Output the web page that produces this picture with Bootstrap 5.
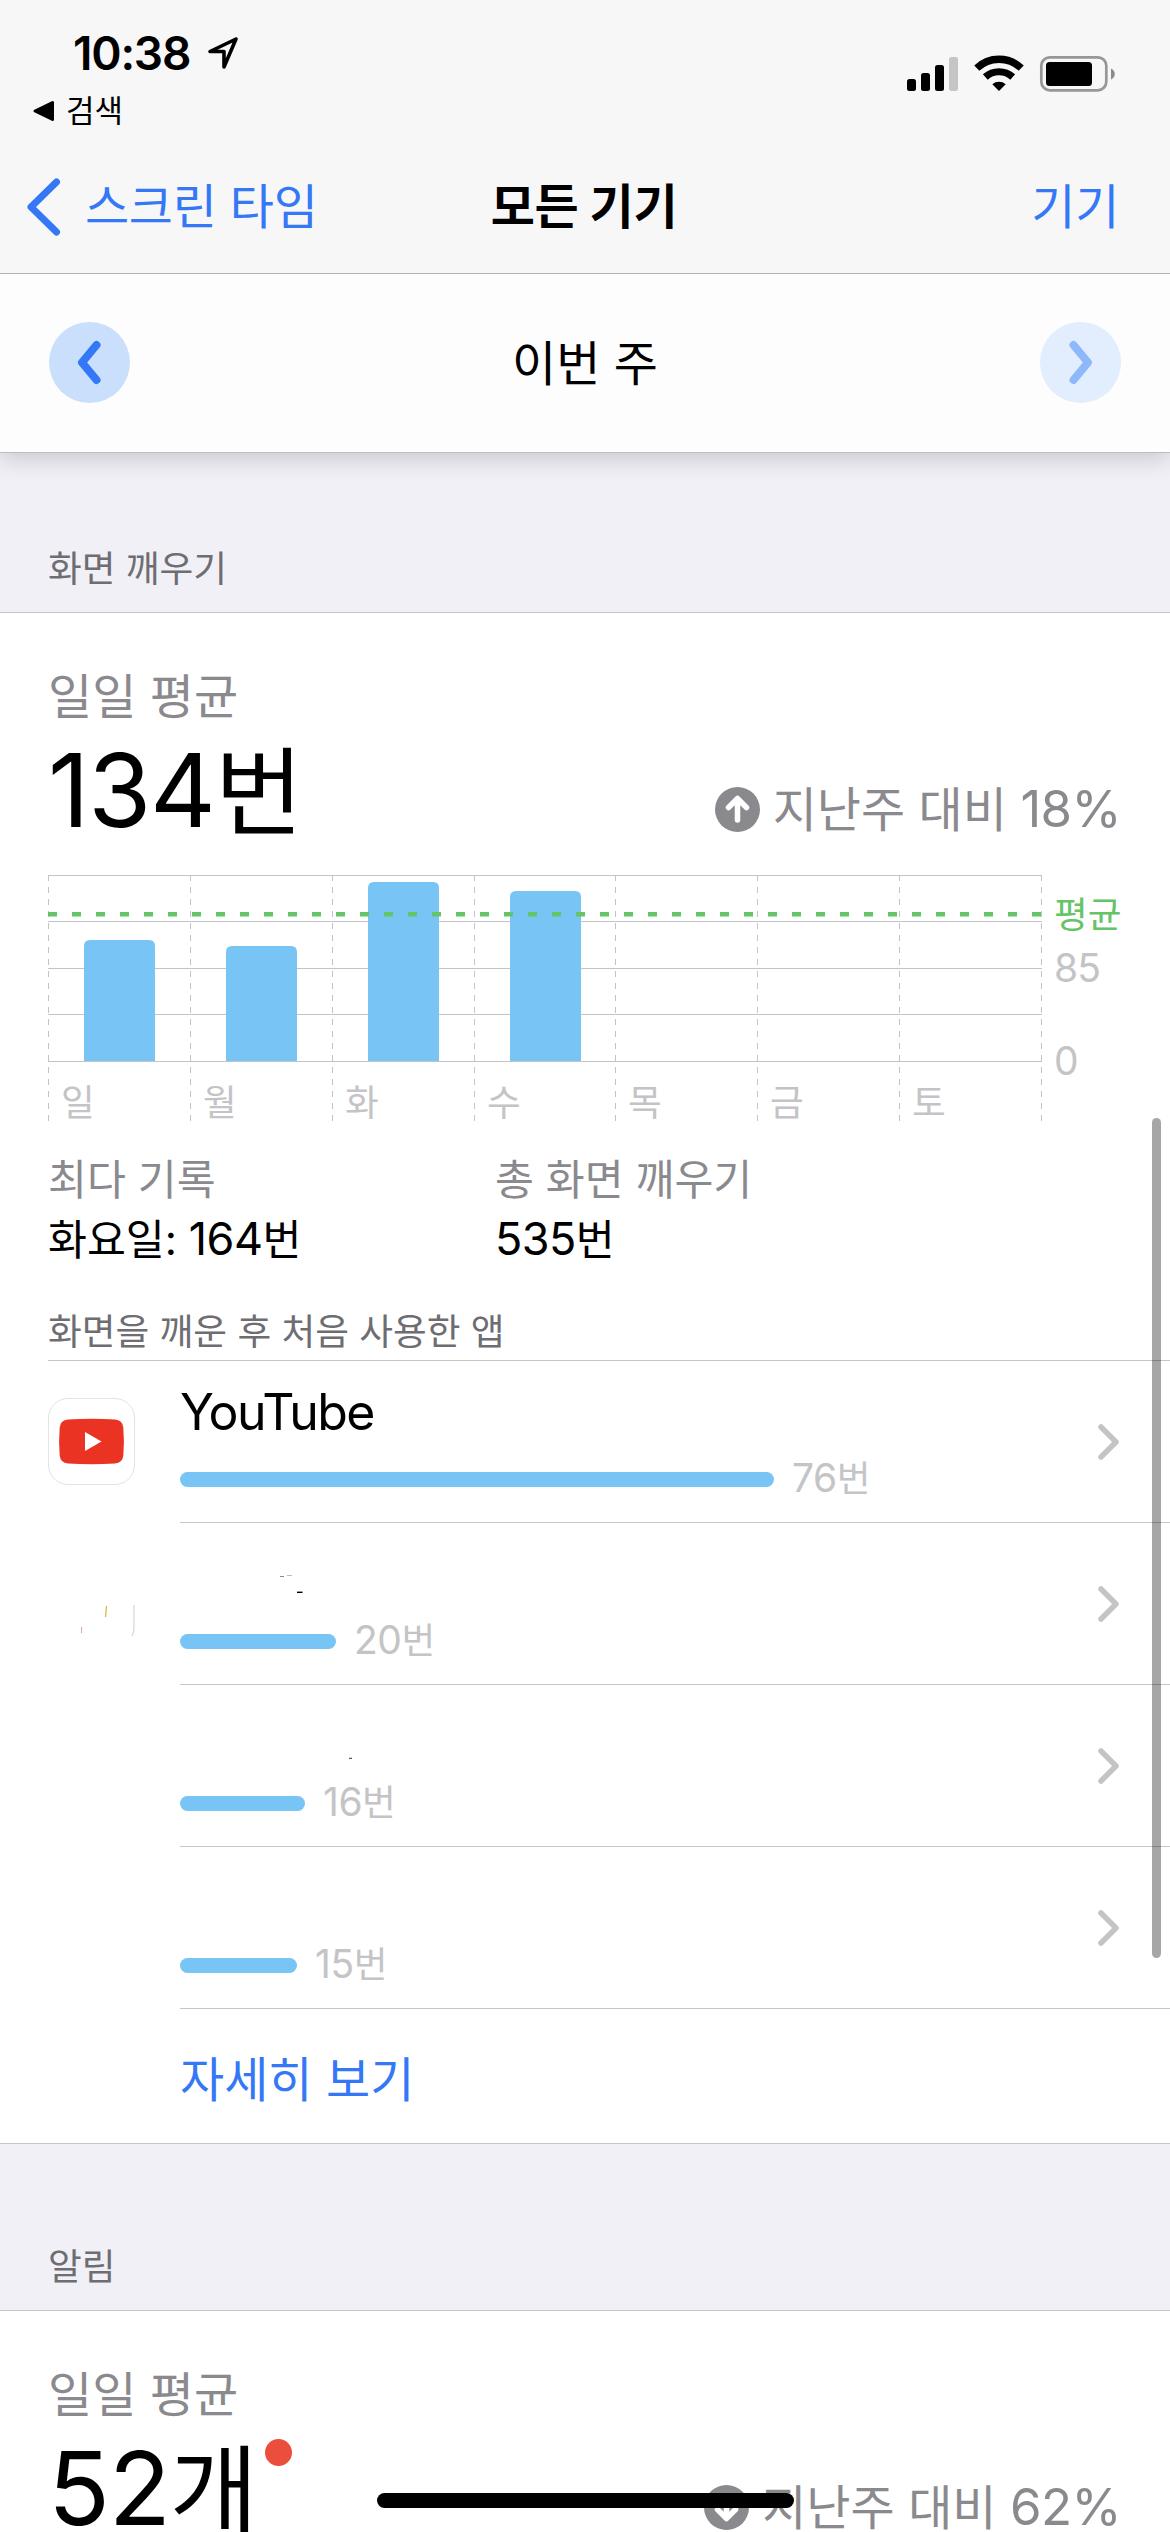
<!DOCTYPE html>
<html lang="ko">
<head>
<meta charset="utf-8">
<meta name="viewport" content="width=device-width, initial-scale=1">
<title>스크린 타임</title>
<link href="https://cdn.jsdelivr.net/npm/bootstrap@5.3.0/dist/css/bootstrap.min.css" rel="stylesheet">
<style>
  body { font-family: Inter, "Noto Sans CJK KR", sans-serif; font-size: 48px; line-height: 60px; color: #000; background: #f1f0f6; }
  svg { display: block; flex: none; overflow: visible; }
  .screen { width: 1170px; height: 2532px; }
  .num { font-size: 1.0625em; line-height: 0; letter-spacing: -.012em; }
  .ios-blue { color: #3478f6; }
  .ios-gray { color: #8a8a8e; }
  .topbar { height: 274px; background: #f7f7f7; border-bottom: 1px solid #b2b2b3; }
  .status { height: 141px; padding: 25px 54px 0 33px; }
  .clock { font-size: 46px; line-height: 56px; font-weight: 600; letter-spacing: -1.2px; padding-left: 40px; gap: 18px; }
  .return { font-size: 31px; line-height: 40px; padding-top: 10px; gap: 11px; }
  .navrow { height: 132px; padding: 0 51px 0 27px; letter-spacing: -.3px; }
  .navrow > * { flex: 1 1 0; }
  .navtitle { padding-left: 22px; }
  .weekbar { height: 179px; padding: 0 49px 2px; background: #fdfdfd; border-bottom: 1px solid #bdbdc0; box-shadow: 0 6px 22px rgba(0,0,0,.17); }
  .round { width: 81px; height: 81px; background: #c9dffc; }
  .round.off { background: #e2eefd; }
  .grouphead { font-size: 36.7px; color: #6d6d72; padding: 0 48px; border-bottom: 1px solid #c6c6c8; }
  .panel { background: #fff; }
  .avg { padding: 54px 49px 0 48px; }
  .bigrow { margin-top: 15px; }
  .big { font-size: 96px; line-height: 100px; }
  .trend { gap: 13px; padding-top: 35px; }
  .stats { font-size: 42.3px; padding: 26px 48px 0; }
  .stats > div:first-child { width: 447px; }
  .stats dd { line-height: 58px; padding-top: 1px; }
  .caption-row { font-size: 36.7px; line-height: 57px; color: #6d6d72; padding-top: 34px; margin-left: 48px; border-bottom: 1px solid #c6c6c8; }
  .app { height: 162px; padding-left: 48px; }
  .app-icon { width: 132px; padding-top: 37px; }
  .app-body { border-bottom: 1px solid #c6c6c8; padding-right: 51px; }
  .app-name { font-size: 50px; line-height: 56px; height: 56px; margin: 23px 0 19px; letter-spacing: -1.6px; }
  .app-use { font-size: 36.7px; line-height: 40px; color: #c4c4c6; gap: 18px; }
  .meter { height: 15px; border-radius: 8px; background: #78c4f5; }
  .more { height: 135px; padding: 41px 0 0 180px; border-bottom: 1px solid #c6c6c8; }
  .dot { width: 27px; height: 27px; background: #eb4e3d; margin: -1px 0 0 7px; }
  .thumb { left: 1152px; top: 1118px; width: 9px; height: 840px; border-radius: 5px; background: rgba(0,0,0,.35); }
  .home { left: 377px; top: 2493px; width: 417px; height: 15px; border-radius: 8px; background: #000; }
</style>
</head>
<body>
<div class="screen position-relative overflow-hidden">

  <header class="topbar position-relative z-1">
    <div class="status d-flex justify-content-between">
      <div>
        <div class="clock d-flex">10:38
          <svg width="30" height="32" viewBox="0 0 30 32" style="margin-top:12px"><path d="M28 2 2 14.5h14V30z" fill="none" stroke="#000" stroke-width="3.6" stroke-linejoin="round"/></svg>
        </div>
        <div class="return d-flex align-items-center">
          <svg width="22" height="22" viewBox="0 0 22 22"><path d="M2 11 19.5 2.5v17z" stroke="#000" stroke-width="3" stroke-linejoin="round"/></svg>
          검색
        </div>
      </div>
      <svg width="209" height="40" viewBox="0 0 209 40" style="margin-top:29px">
        <rect x="0" y="25" width="9" height="12" rx="2.5"/><rect x="14" y="19" width="9" height="18" rx="2.5"/><rect x="28" y="11" width="9" height="26" rx="2.5"/><rect x="42" y="3" width="9" height="34" rx="2.5" fill="#c5c5c5"/>
        <path d="M69.8 14.2a32 32 0 0 1 44.4 0" fill="none" stroke="#000" stroke-width="7.4"/>
        <path d="M78.3 23a20.5 20.5 0 0 1 27.4 0" fill="none" stroke="#000" stroke-width="7.2"/>
        <path d="M85.3 30.2a10.5 10.5 0 0 1 13.4 0L92 37z"/>
        <rect x="134.3" y="3.3" width="65" height="33" rx="8.5" fill="none" stroke="#979797" stroke-width="2.7"/>
        <rect x="139" y="8" width="46" height="24" rx="3.5"/><path d="M204 14.5c5 1.8 5 9.2 0 11z" fill="#8b8b8b"/>
      </svg>
    </div>
    <nav class="navrow d-flex align-items-center">
      <div class="ios-blue d-flex align-items-center" style="gap:25px">
        <svg width="33" height="58" viewBox="0 0 33 58"><path d="M29.5 4 4 29l25.500 25" fill="none" stroke="#3478f6" stroke-width="7" stroke-linecap="round" stroke-linejoin="round"/></svg>
        <span>스크린 타임</span>
      </div>
      <div class="navtitle text-center fw-bold">모든 기기</div>
      <div class="ios-blue text-end">기기</div>
    </nav>
  </header>

  <div class="weekbar d-flex justify-content-between align-items-center position-relative">
    <div class="round rounded-circle d-flex align-items-center justify-content-center">
      <svg width="25" height="43" viewBox="0 0 25 43"><path d="M19.500 4 5 21.500l14.500 17.500" fill="none" stroke="#3478f6" stroke-width="8" stroke-linecap="round" stroke-linejoin="round"/></svg>
    </div>
    <div class="pt-1">이번 주</div>
    <div class="round off rounded-circle d-flex align-items-center justify-content-center">
      <svg width="25" height="43" viewBox="0 0 25 43"><path d="M5.500 4 20 21.500 5.500 39" fill="none" stroke="#8db9fa" stroke-width="8" stroke-linecap="round" stroke-linejoin="round"/></svg>
    </div>
  </div>

  <div class="grouphead" style="height:160px;padding-top:86px">화면 깨우기</div>

  <section class="panel">
    <div class="avg">
      <div class="ios-gray">일일 평균</div>
      <div class="bigrow d-flex justify-content-between">
        <div class="big"><span class="num">134</span>번</div>
        <div class="trend ios-gray d-flex align-items-center">
          <svg width="45" height="45" viewBox="0 0 45 45"><circle cx="22.500" cy="22.500" r="22.500" fill="#8a8a8e"/><path d="M22.500 33V12M13.500 20.500l9-9 9 9" fill="none" stroke="#fff" stroke-width="5.500" stroke-linecap="round" stroke-linejoin="round"/></svg>
          <span>지난주 대비 <span class="num">18%</span></span>
        </div>
      </div>
    </div>

    <svg class="chart" width="1074" height="250" viewBox="48 874 1074 250" style="margin:32px 0 0 48px">
      <g stroke="#c4c4c6" stroke-width="1">
        <path d="M48 875.500h994M48 921.500h994M48 968.500h994M48 1014.500h994"/>
        <path stroke-dasharray="6 6" d="M48.500 875v247M190.500 875v247M332.500 875v247M474.500 875v247M615.500 875v247M757.500 875v247M899.500 875v247M1041.500 875v247"/>
      </g>
      <g fill="#78c4f5">
        <path d="M84 1061V946q0-6 6-6h59q6 0 6 6v115z"/>
        <path d="M226 1061V952q0-6 6-6h59q6 0 6 6v109z"/>
        <path d="M368 1061V888q0-6 6-6h59q6 0 6 6v173z"/>
        <path d="M510 1061V897q0-6 6-6h59q6 0 6 6v164z"/>
      </g>
      <path d="M48 1061.500h994" stroke="#c4c4c6"/>
      <path d="M48 914.200h994" stroke="#65c466" stroke-width="4.400" stroke-dasharray="9 15"/>
      <g font-size="36.7" fill="#c4c4c6">
        <text x="61" y="1116">일</text><text x="203" y="1116">월</text><text x="345" y="1116">화</text><text x="487" y="1116">수</text><text x="628" y="1116">목</text><text x="770" y="1116">금</text><text x="912" y="1116">토</text>
        <text x="1054" y="928" fill="#65c466">평균</text>
        <text x="1054" y="982" font-size="39" letter-spacing="-1">85</text><text x="1054" y="1075" font-size="39">0</text>
      </g>
    </svg>

    <dl class="stats d-flex mb-0">
      <div><dt class="fw-normal ios-gray">최다 기록</dt><dd class="mb-0">화요일: <span class="num">164</span>번</dd></div>
      <div><dt class="fw-normal ios-gray">총 화면 깨우기</dt><dd class="mb-0"><span class="num">535</span>번</dd></div>
    </dl>

    <div class="caption-row">화면을 깨운 후 처음 사용한 앱</div>

    <div class="app d-flex">
      <div class="app-icon">
        <svg width="87" height="87" viewBox="0 0 87 87"><rect x=".5" y=".5" width="86" height="86" rx="19.500" fill="#fff" stroke="#e3e3e5"/><path d="M20 21.500Q43.500 20 67 21.500 74.500 22 75.300 29.500 76.500 43.500 75.300 57.500 74.500 65 67 65.500 43.500 67 20 65.500 12.500 65 11.700 57.500 10.500 43.500 11.700 29.500 12.500 22 20 21.500z" fill="#ea3323"/><path d="M37 34v19l16.500-9.500z" fill="#fff"/></svg>
      </div>
      <div class="app-body flex-grow-1 d-flex justify-content-between align-items-center">
        <div class="align-self-start"><div class="app-name">YouTube</div><div class="app-use d-flex align-items-center"><div class="meter" style="width:594px"></div><span><span class="num">76</span>번</span></div></div>
        <svg width="21" height="36" viewBox="0 0 21 36"><path d="M3 3 18 18 3 33" fill="none" stroke="#c4c4c6" stroke-width="5.500" stroke-linecap="round" stroke-linejoin="round"/></svg>
      </div>
    </div>

    <div class="app d-flex">
      <div class="app-icon">
        <svg width="87" height="87" viewBox="0 0 87 87"><path d="M58.500 46 57.500 57" stroke="#d9b64a" stroke-width="1.300"/><path d="M86 45v23q0 4-2 8" fill="none" stroke="#d5d5d8" stroke-width="1.200"/><path d="M33.500 67v6" stroke="#d8a5ae"/></svg>
      </div>
      <div class="app-body flex-grow-1 d-flex justify-content-between align-items-center">
        <div class="align-self-start"><div class="app-name"><svg width="200" height="56" viewBox="180 1547 200 56"><path d="M280 1577.500h4" stroke="#888"/><path d="M287 1576.500h5" stroke="#bbb"/><path d="M297 1593.300h5.500" stroke="#000" stroke-width="1.400"/></svg></div><div class="app-use d-flex align-items-center"><div class="meter" style="width:156px"></div><span><span class="num">20</span>번</span></div></div>
        <svg width="21" height="36" viewBox="0 0 21 36"><path d="M3 3 18 18 3 33" fill="none" stroke="#c4c4c6" stroke-width="5.500" stroke-linecap="round" stroke-linejoin="round"/></svg>
      </div>
    </div>

    <div class="app d-flex">
      <div class="app-icon"></div>
      <div class="app-body flex-grow-1 d-flex justify-content-between align-items-center">
        <div class="align-self-start"><div class="app-name"><svg width="200" height="56" viewBox="180 1709 200 56"><path d="M349 1759.300h3" stroke="#333"/></svg></div><div class="app-use d-flex align-items-center"><div class="meter" style="width:125px"></div><span><span class="num">16</span>번</span></div></div>
        <svg width="21" height="36" viewBox="0 0 21 36"><path d="M3 3 18 18 3 33" fill="none" stroke="#c4c4c6" stroke-width="5.500" stroke-linecap="round" stroke-linejoin="round"/></svg>
      </div>
    </div>

    <div class="app d-flex">
      <div class="app-icon"></div>
      <div class="app-body flex-grow-1 d-flex justify-content-between align-items-center">
        <div class="align-self-start"><div class="app-name"></div><div class="app-use d-flex align-items-center"><div class="meter" style="width:117px"></div><span><span class="num">15</span>번</span></div></div>
        <svg width="21" height="36" viewBox="0 0 21 36"><path d="M3 3 18 18 3 33" fill="none" stroke="#c4c4c6" stroke-width="5.500" stroke-linecap="round" stroke-linejoin="round"/></svg>
      </div>
    </div>

    <div class="more ios-blue">자세히 보기</div>
  </section>

  <div class="grouphead" style="height:167px;padding-top:93px">알림</div>

  <section class="panel">
    <div class="avg">
      <div class="ios-gray">일일 평균</div>
      <div class="bigrow d-flex justify-content-between">
        <div class="d-flex"><div class="big"><span class="num">52</span>개</div><div class="dot rounded-circle"></div></div>
        <div class="trend ios-gray d-flex align-items-center">
          <svg width="45" height="45" viewBox="0 0 45 45"><circle cx="22.500" cy="22.500" r="22.500" fill="#8a8a8e"/><path d="M22.500 12v21M13.500 24.500l9 9 9-9" fill="none" stroke="#fff" stroke-width="5.500" stroke-linecap="round" stroke-linejoin="round"/></svg>
          <span>지난주 대비 <span class="num">62%</span></span>
        </div>
      </div>
    </div>
  </section>

  <div class="thumb position-absolute"></div>
  <div class="home position-absolute"></div>
</div>
<script src="https://cdn.jsdelivr.net/npm/bootstrap@5.3.0/dist/js/bootstrap.bundle.min.js"></script>
</body>
</html>
